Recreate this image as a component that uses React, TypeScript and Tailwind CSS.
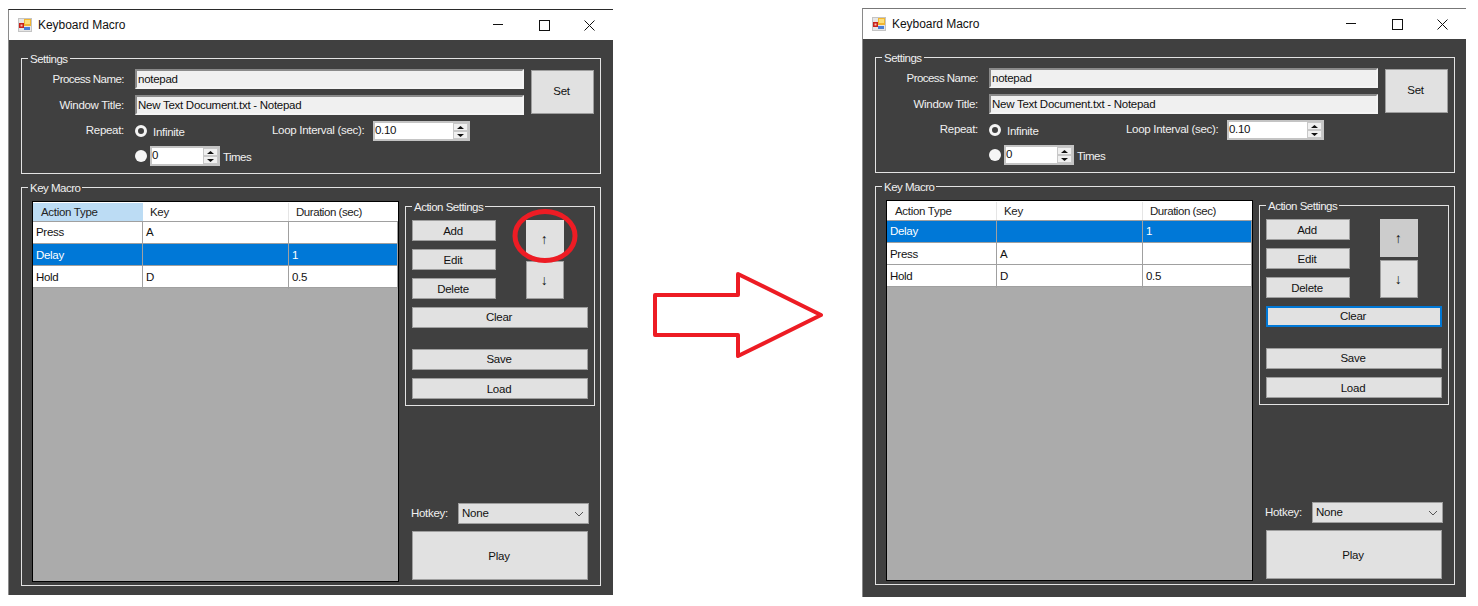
import { FC, ReactNode } from "react";

const font = "font-['Liberation_Sans',Arial,sans-serif]";

interface GroupProps {
  title: string;
  className: string;
  children: ReactNode;
}

const Group: FC<GroupProps> = ({ title, className, children }) => (
  <div className={`relative shrink-0 border border-[#e3e3e3] ${className}`}>
    <span className="absolute left-[6px] top-[-7px] bg-[#404040] px-[2px] text-[11.5px] leading-[14px] tracking-[-0.5px] text-[#f0f0f0]">
      {title}
    </span>
    {children}
  </div>
);

const Btn: FC<{ className: string; children: ReactNode }> = ({ className, children }) => (
  <div className={`flex shrink-0 items-center justify-center pr-[2px] text-[11.5px] tracking-[-0.25px] text-[#111] ${className}`}>
    {children}
  </div>
);

const normal = "bg-[#e1e1e1] border border-[#9e9e9e]";

const Spinner: FC<{ value: string; className: string }> = ({ value, className }) => (
  <div className={`flex h-5 shrink-0 items-stretch border-2 border-[#c4c4c4] bg-white text-[11.5px] text-[#111] ${className}`}>
    <span className="flex-1 leading-[15px]">{value}</span>
    <div className="flex w-[15px] flex-col">
      <div className="flex flex-1 items-center justify-center border border-[#c8c8c8] bg-[#f0f0f0]">
        <svg width="7" height="3" viewBox="0 0 7 3">
          <path d="M3.5 0 7 3H0z" fill="#111" />
        </svg>
      </div>
      <div className="flex flex-1 items-center justify-center border border-[#c8c8c8] bg-[#f0f0f0]">
        <svg width="7" height="3" viewBox="0 0 7 3">
          <path d="M0 0h7L3.5 3z" fill="#111" />
        </svg>
      </div>
    </div>
  </div>
);

const Radio: FC<{ checked?: boolean }> = ({ checked }) => (
  <div
    className={`h-3 w-3 shrink-0 rounded-full ${
      checked ? "border-[3px] border-[#f4f4f4] bg-[#404040]" : "bg-[#f6f6f6]"
    }`}
  />
);

const TextBox: FC<{ value: string }> = ({ value }) => (
  <div className="h-5 flex-1 truncate border-2 border-t-[#8a8a8a] border-l-[#8a8a8a] border-r-[#f4f4f4] border-b-[#f4f4f4] bg-[#f0f0f0] pl-[1px] text-[11.5px] leading-[17px] tracking-[-0.27px] text-[#111]">
    {value}
  </div>
);

const AppIcon = () => (
  <svg width="14" height="14" viewBox="0 0 14 14" className="shrink-0">
    <rect width="14" height="14" fill="#e6e6e6" />
    <path d="M0 .5h14M.5 0v14M0 13.5h14M13.5 0v14" stroke="#c4c4c4" />
    <rect x="1" y="5" width="5" height="5" fill="#c8201a" />
    <rect x="2.5" y="6.5" width="2" height="2" fill="#f6c0b0" />
    <rect x="6" y="1" width="7" height="7" fill="#f2b632" />
    <rect x="7" y="2" width="5" height="4" fill="#fbe07c" />
    <rect x="6" y="9" width="6" height="3" fill="#4a7fd6" />
  </svg>
);

const TitleButtons = () => (
  <div className="ml-auto flex h-full pr-[1px]">
    <div className="flex w-[46px] items-center justify-center">
      <svg width="10" height="10" viewBox="0 0 10 10">
        <path d="M0 4.5h10" stroke="#111" />
      </svg>
    </div>
    <div className="flex w-[46px] items-center justify-center">
      <svg width="11" height="11" viewBox="0 0 11 11">
        <rect x=".5" y=".5" width="10" height="10" fill="none" stroke="#111" />
      </svg>
    </div>
    <div className="flex w-[45px] items-center justify-center">
      <svg width="11" height="11" viewBox="0 0 11 11">
        <path d="M.5.5l10 10M10.5.5l-10 10" stroke="#111" />
      </svg>
    </div>
  </div>
);

interface Row {
  type: string;
  key: string;
  duration: string;
  selected?: boolean;
}

const MacroGrid: FC<{ rows: Row[]; headerActive: boolean }> = ({ rows, headerActive }) => (
  <div className="h-[381px] w-[367px] shrink-0 border border-black bg-[#ababab] text-[11.5px] tracking-[-0.3px]">
    <div className="grid h-[20px] grid-cols-[110px_146px_109px] border-b border-[#a0a0a0] bg-white pt-[1px] text-[#222]">
      <div className={`pl-[8px] leading-[18px] ${headerActive ? "bg-[#bcdcf4]" : "border-r border-[#e5e5e5]"}`}>
        Action Type
      </div>
      <div className="border-r border-[#e5e5e5] pl-[7px] leading-[18px]">Key</div>
      <div className="pl-[7px] leading-[18px] tracking-[-0.45px]">Duration (sec)</div>
    </div>
    {rows.map((r, i) => (
      <div
        key={r.type}
        className={`grid h-[22px] grid-cols-[110px_146px_109px] border-b border-[#a0a0a0] ${
          i === 0 ? "leading-[21px]" : "leading-[23px]"
        } ${r.selected ? "bg-[#0078d7] text-white" : "bg-white text-[#111]"}`}
      >
        <div className="border-r border-[#a0a0a0] pl-[3px]">{r.type}</div>
        <div className="border-r border-[#a0a0a0] pl-[3px]">{r.key}</div>
        <div className="border-r border-[#a0a0a0] pl-[3px]">{r.duration}</div>
      </div>
    ))}
  </div>
);

interface WindowProps {
  rows: Row[];
  after?: boolean;
  className: string;
}

const MacroWindow: FC<WindowProps> = ({ rows, after, className }) => (
  <div className={`flex shrink-0 flex-col border-l ${className}`}>
    {/* title bar */}
    <div className="flex h-[30px] items-center bg-white pl-[9px]">
      <AppIcon />
      <span className="ml-[6px] text-[12px] tracking-[-0.05px] text-[#111]">Keyboard Macro</span>
      <TitleButtons />
    </div>

    <div className="flex flex-1 flex-col gap-[13px] bg-[#404040] pl-[12px] pt-[18px]">
      {/* settings */}
      <Group title="Settings" className="h-[116px] w-[580px]">
        <div className="flex pt-[10px] text-[11.5px] tracking-[-0.3px] text-[#f0f0f0]">
          <div className="flex w-[502px] flex-col">
            <div className="flex h-5 items-center">
              <span className="mt-[2px] w-[103px] pr-[1px] text-right tracking-[-0.55px]">Process Name:</span>
              <div className="ml-[10px] flex flex-1">
                <TextBox value="notepad" />
              </div>
            </div>
            <div className="mt-[6px] flex h-5 items-center">
              <span className="mt-[2px] w-[103px] pr-[1px] text-right">Window Title:</span>
              <div className="ml-[10px] flex flex-1">
                <TextBox value="New Text Document.txt - Notepad" />
              </div>
            </div>
            <div className="mt-[6px] flex h-5 items-center">
              <span className="w-[103px] pr-[1px] text-right">Repeat:</span>
              <div className="ml-[10px] flex w-[137px] items-center">
                <Radio checked />
                <span className="ml-[6px] mt-[3px]">Infinite</span>
              </div>
              <span className="w-[101px]">Loop Interval (sec):</span>
              <Spinner value="0.10" className="w-[97px]" />
            </div>
            <div className="mt-[5px] flex h-5 items-center pl-[113px]">
              <Radio />
              <Spinner value="0" className="ml-[3px] w-[70px]" />
              <span className="ml-[3px] mt-[3px] tracking-[-0.55px]">Times</span>
            </div>
          </div>
          <Btn className={`ml-[7px] mt-[1px] h-[44px] w-[63px] ${normal}`}>Set</Btn>
        </div>
      </Group>

      {/* key macro */}
      <Group title="Key Macro" className="h-[399px] w-[580px]">
        <div className="flex pl-[10px] pt-[13px]">
          <MacroGrid rows={rows} headerActive={!after} />
          <div className="ml-[6px] flex w-[190px] flex-col pt-[5px]">
            <Group title="Action Settings" className="h-[200px] w-[190px]">
              <div className="flex flex-col pl-[6px] pt-[13px]">
                <div className="flex">
                  <div className="flex w-[84px] flex-col gap-2">
                    <Btn className={`h-[21px] w-[84px] pt-[2px] ${normal}`}>Add</Btn>
                    <Btn className={`h-[21px] w-[84px] pt-[2px] ${normal}`}>Edit</Btn>
                    <Btn className={`h-[21px] w-[84px] pt-[2px] ${normal}`}>Delete</Btn>
                  </div>
                  <div className="relative ml-[30px] flex w-[38px] flex-col gap-[3px] text-[#111]">
                    <Btn className={`h-[38px] w-[38px] text-[14px] ${after ? "bg-[#cccccc]" : "bg-[#e1e1e1]"}`}>↑</Btn>
                    <Btn className={`h-[38px] w-[38px] text-[14px] ${normal}`}>↓</Btn>
                    {!after && (
                      <svg
                        width="66"
                        height="54"
                        viewBox="0 0 66 54"
                        className="absolute left-[-14px] top-[-11px]"
                      >
                        <ellipse cx="33" cy="27" rx="30" ry="24.5" fill="none" stroke="#ed1c24" strokeWidth="5" />
                      </svg>
                    )}
                  </div>
                </div>
                <Btn
                  className={`mt-2 h-[21px] w-[176px] ${
                    after ? "border-2 border-[#0078d7] bg-[#e1e1e1]" : normal
                  }`}
                >
                  Clear
                </Btn>
                <Btn className={`mt-[21px] h-[21px] w-[176px] ${normal}`}>Save</Btn>
                <Btn className={`mt-2 h-[21px] w-[176px] pt-[2px] ${normal}`}>Load</Btn>
              </div>
            </Group>

            <div className="mt-[97px] flex h-[21px] items-center pl-[6px]">
              <span className="w-[47px] text-[11.5px] tracking-[-0.3px] text-[#f0f0f0]">Hotkey:</span>
              <div className={`flex h-[21px] w-[131px] items-center justify-between pl-[3px] pr-[4px] text-[11.5px] tracking-[-0.2px] text-[#111] ${normal}`}>
                None
                <svg width="10" height="6" viewBox="0 0 10 6">
                  <path d="M1 1l4 4 4-4" fill="none" stroke="#555" />
                </svg>
              </div>
            </div>
            <Btn className={`ml-[7px] mt-[7px] h-[49px] w-[176px] pt-[2px] ${normal}`}>Play</Btn>
          </div>
        </div>
      </Group>
    </div>
  </div>
);

const App = () => (
  <div className={`flex h-[606px] w-[1478px] overflow-hidden bg-white pl-2 ${font}`}>
    <MacroWindow
      className="mt-[9px] h-[586px] w-[605px] border-t border-l-[#8a8a8a] border-t-[#2a2a2a]"
      rows={[
        { type: "Press", key: "A", duration: "" },
        { type: "Delay", key: "", duration: "1", selected: true },
        { type: "Hold", key: "D", duration: "0.5" },
      ]}
    />

    {/* arrow between the two windows */}
    <div className="flex w-[249px] shrink-0 items-start pt-[270px]">
      <svg width="249" height="92" viewBox="0 0 249 92">
        <path
          d="M42 25h83V4l83 41-83 41V65H42z"
          fill="none"
          stroke="#ed1c24"
          strokeWidth="4"
          strokeLinejoin="round"
        />
      </svg>
    </div>

    <MacroWindow
      after
      className="mt-[8px] h-[589px] w-[604px] border-t border-l-[#8a8a8a] border-t-[#777777]"
      rows={[
        { type: "Delay", key: "", duration: "1", selected: true },
        { type: "Press", key: "A", duration: "" },
        { type: "Hold", key: "D", duration: "0.5" },
      ]}
    />
  </div>
);

export default App;
